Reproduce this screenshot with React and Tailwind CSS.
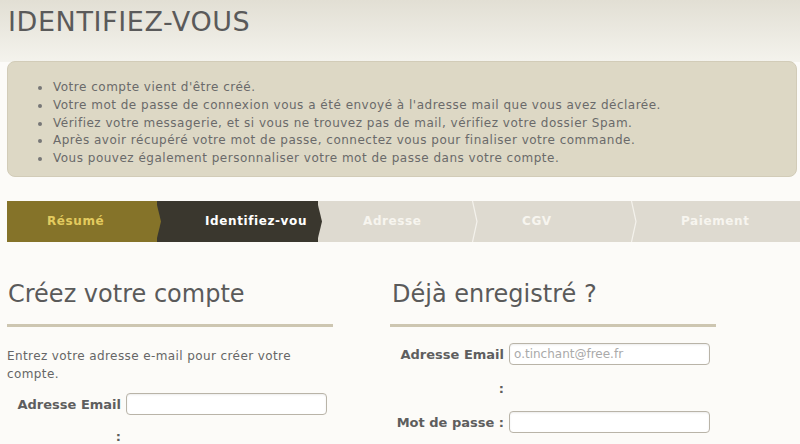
import React from 'react';

const steps = [
  { name: 'Résumé', w: 'w-[150px]', pl: 'pl-[40px]', bg: 'bg-[#857329]', text: 'text-[#e3cb5f]', arrow: '#857329' },
  { name: 'Identifiez-vou', w: 'w-[161px]', pl: 'pl-[48px]', bg: 'bg-[#3a372e]', text: 'text-white', arrow: '#3a372e' },
  { name: 'Adresse', w: 'w-[155px]', pl: 'pl-[45px]', bg: 'bg-[#dedad0]', text: 'text-[#f7f5ef]', arrow: null },
  { name: 'CGV', w: 'w-[159px]', pl: 'pl-[49px]', bg: 'bg-[#dedad0]', text: 'text-[#f7f5ef]', arrow: null },
  { name: 'Paiement', w: 'flex-1', pl: 'pl-[49px]', bg: 'bg-[#dedad0]', text: 'text-[#f7f5ef]', arrow: null, last: true },
];

const messages = [
  "Votre compte vient d'être créé.",
  "Votre mot de passe de connexion vous a été envoyé à l'adresse mail que vous avez déclarée.",
  'Vérifiez votre messagerie, et si vous ne trouvez pas de mail, vérifiez votre dossier Spam.',
  'Après avoir récupéré votre mot de passe, connectez vous pour finaliser votre commande.',
  'Vous pouvez également personnaliser votre mot de passe dans votre compte.',
];

function Field({ label, second, placeholder, tight }) {
  return (
    <div className="flex items-start">
      <label className={`w-[114px] shrink-0 text-right text-[13px] font-bold text-[#5e5e5e] ${tight ? 'leading-[32px]' : 'leading-[34px]'}`}>
        {label}
        {second && <><br />{second}</>}
      </label>
      <input
        type="text"
        placeholder={placeholder}
        className={`ml-[5px] h-[22px] w-[201px] rounded-[4px] border border-[#b9b4a8] bg-white px-[4px] text-[12px] text-[#555] placeholder:text-[#aaa] outline-none shadow-[inset_0_1px_2px_rgba(0,0,0,0.08)] ${tight ? 'mt-[4px]' : 'mt-[5px]'}`}
      />
    </div>
  );
}

export default function App() {
  return (
    <div className="min-h-[444px] w-[800px] overflow-hidden bg-[#fcfbf8] font-['DejaVu_Sans',Verdana,sans-serif] text-[#666]">
      {/* Header */}
      <div className="h-[62px] bg-gradient-to-b from-[#e2dfd4] to-[#f4f3ed] px-[8px] pt-[5px]">
        <h1 className="text-[27px] font-normal leading-[34px] tracking-[0.6px] text-[#5a5a5a]">IDENTIFIEZ-VOUS</h1>
      </div>

      {/* Notice */}
      <div className="ml-[7px] mr-[3px] -mt-[1px] rounded-[8px] border border-[#d2ccb8] bg-[#ddd8c5] pl-[30px] pt-[17px] pb-[8px]">
        <ul className="list-disc pl-[14px] text-[12px] leading-[17.8px] tracking-[0.5px] text-[#6a6a6a] marker:text-[#777]">
          {messages.map((m) => (
            <li key={m} className="pl-[1px]">{m}</li>
          ))}
        </ul>
      </div>

      {/* Steps */}
      <div className="mt-[24px] ml-[7px] flex h-[41px]">
        {steps.map((s) => (
          <div key={s.name} className={`relative flex h-full min-w-0 shrink-0 items-center ${s.w} ${s.pl} ${s.bg}`}>
            <span className={`block whitespace-nowrap text-[12px] font-bold tracking-[0.6px] ${s.text}`}>
              {s.name}
            </span>
            {!s.last && (
              <svg className="absolute -right-[5px] top-0 z-10" width="6" height="41" viewBox="0 0 6 41">
                {s.arrow ? (
                  <polygon points="0,0 5,20.5 0,41" fill={s.arrow} />
                ) : (
                  <polyline points="0.5,0 5,20.5 0.5,41" fill="none" stroke="#f4f2ec" strokeWidth="1.2" />
                )}
              </svg>
            )}
          </div>
        ))}
      </div>

      {/* Forms */}
      <div className="mt-[36px] flex gap-[57px] pl-[7px]">
        <div className="w-[326px]">
          <h2 className="pl-[1px] text-[24px] font-normal leading-[32px] text-[#5a5a5a]">Créez votre compte</h2>
          <div className="mt-[14px] h-[3px] bg-[#cdc6b1]" />
          <p className="mt-[20px] text-[12px] leading-[18px] tracking-[0.4px] text-[#666]">
            Entrez votre adresse e-mail pour créer votre compte.
          </p>
          <div className="mt-[6px]">
            <Field label="Adresse Email" second=":" tight />
          </div>
        </div>
        <div className="w-[326px]">
          <h2 className="pl-[2px] text-[24px] font-normal leading-[32px] text-[#5a5a5a]">Déjà enregistré ?</h2>
          <div className="mt-[14px] h-[3px] bg-[#cdc6b1]" />
          <div className="mt-[11px]">
            <Field label="Adresse Email" second=":" placeholder="o.tinchant@free.fr" />
            <Field label="Mot de passe :" />
          </div>
        </div>
      </div>
    </div>
  );
}
